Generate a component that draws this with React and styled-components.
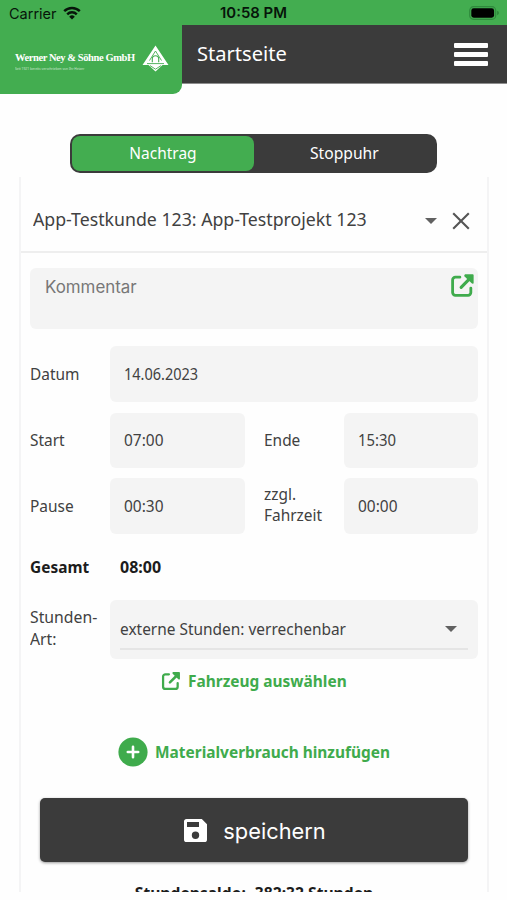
import React, { useState } from 'react';
import styled, { createGlobalStyle } from 'styled-components';

const App = () => {
  const [mode, setMode] = useState('nachtrag');

  return (
    <Screen>
      <GlobalStyle />
      <StatusBar>
        <Carrier>
          <span>Carrier</span>
          <WifiIcon />
        </Carrier>
        <Clock>10:58 PM</Clock>
        <BatteryIcon />
      </StatusBar>

      <TopBar>
        <LogoTab>
          <LogoText>
            <LogoName>Werner Ney &amp; Söhne GmbH</LogoName>
            <LogoClaim>Seit 1921 bereits verschrieben von Ihr Heizer</LogoClaim>
          </LogoText>
          <LogoMark />
        </LogoTab>
        <PageTitle><Label $size={20.5} $scale={0.98}>Startseite</Label></PageTitle>
        <MenuButton aria-label="Menü">
          <MenuLine />
          <MenuLine />
          <MenuLine />
        </MenuButton>
      </TopBar>

      <Switch>
        <SwitchOption $active={mode === 'nachtrag'} onClick={() => setMode('nachtrag')}>
          <Label $size={17} $scale={0.91} $center>Nachtrag</Label>
        </SwitchOption>
        <SwitchOption $active={mode === 'stoppuhr'} onClick={() => setMode('stoppuhr')}>
          <Label $size={17} $scale={0.92} $center>Stoppuhr</Label>
        </SwitchOption>
      </Switch>

      <Card>
        <ProjectRow>
          <ProjectName><Label $size={18} $scale={0.984}>App-Testkunde 123: App-Testprojekt 123</Label></ProjectName>
          <Caret />
          <CloseIcon />
        </ProjectRow>

        <Form>
          <Comment>
            <span>Kommentar</span>
            <ExternalIcon size={25} />
          </Comment>

          <Row $height={56}>
            <FieldLabel><Label>Datum</Label></FieldLabel>
            <Field><Label $scale={0.905}>14.06.2023</Label></Field>
          </Row>
          <Row $height={55} $top={11}>
            <FieldLabel $up={1}><Label>Start</Label></FieldLabel>
            <Field $up={1}><Label>07:00</Label></Field>
            <FieldLabel $second $up={1}><Label>Ende</Label></FieldLabel>
            <Field $up={1}><Label $scale={0.93}>15:30</Label></Field>
          </Row>
          <Row $height={56} $top={10}>
            <FieldLabel><Label>Pause</Label></FieldLabel>
            <Field><Label>00:30</Label></Field>
            <FieldLabel $second $line={21} $up={3}><Label>zzgl.<br />Fahrzeit</Label></FieldLabel>
            <Field><Label>00:00</Label></Field>
          </Row>

          <TotalRow>
            <FieldLabel><Label $bold>Gesamt</Label></FieldLabel>
            <Label $bold $scale={1}>08:00</Label>
          </TotalRow>

          <Row $height={59}>
            <FieldLabel $line={22} $up={4}><Label $scale={0.985}>Stunden-<br />Art:</Label></FieldLabel>
            <SelectField>
              <SelectValue>
                <Label>externe Stunden: verrechenbar</Label>
                <Caret />
              </SelectValue>
            </SelectField>
          </Row>

          <VehicleLink>
            <ExternalIcon size={20} />
            <Label $bold>Fahrzeug auswählen</Label>
          </VehicleLink>
          <MaterialLink>
            <PlusIcon />
            <Label $bold>Materialverbrauch hinzufügen</Label>
          </MaterialLink>

          <SaveButton>
            <SaveIcon />
            <span>speichern</span>
          </SaveButton>

          <Balance><Label $bold $scale={0.977} $center>Stundensaldo: -382:32 Stunden</Label></Balance>
        </Form>
      </Card>
    </Screen>
  );
};

// Icons
const WifiIcon = () => (
  <svg width="18" height="14" viewBox="0 0 18 14">
    <path d="M9 13.5 6.2 10.7a4 4 0 0 1 5.6 0z" fill="#07150a" />
    <path d="M4.2 8.3a6.8 6.8 0 0 1 9.6 0M1.2 5.2a11 11 0 0 1 15.6 0" fill="none" stroke="#07150a" strokeWidth="2.4" />
  </svg>
);

const BatteryIcon = () => (
  <svg width="31" height="14" viewBox="0 0 31 14">
    <rect x="0.7" y="0.7" width="26" height="12.6" rx="3.8" fill="none" stroke="#2f8a3c" strokeWidth="1.2" />
    <rect x="2.3" y="2.3" width="22.8" height="9.4" rx="2.4" fill="#000" />
    <path d="M28 4.8q2 .6 2 2.2t-2 2.2z" fill="#2f8a3c" />
  </svg>
);

const LogoMark = () => (
  <svg width="27" height="27" viewBox="0 0 27 27">
    <path d="M13.5.5 26.5 20h-6l-7 6.5-7-6.5h-6z" fill="#fff" />
    <path d="M13.500 6 7.500 15.500M13.500 6l6 9.500M5 18.600h17M8 20.600l5.500 3.600 5.500-3.600" fill="none" stroke="#43ad50" strokeWidth="0.9" />
    <path d="M10.300 17.200v-3.200a3.200 3.200 0 0 1 6.400 0v3.200" fill="none" stroke="#43ad50" strokeWidth="1.1" />
  </svg>
);

const Caret = () => (
  <svg width="12" height="6" viewBox="0 0 12 6">
    <path d="M0 0h12L6 6z" fill="#616161" />
  </svg>
);

const CloseIcon = () => (
  <svg width="18" height="18" viewBox="0 0 18 18">
    <path d="M1.2 1.2l15.6 15.6M16.8 1.2 1.2 16.8" stroke="#555" strokeWidth="2.1" />
  </svg>
);

const ExternalIcon = ({ size }) => (
  <svg width={size} height={size} viewBox="0 0 24 24">
    <path
      d="M9.5 4H5.2a2.7 2.7 0 0 0-2.7 2.7v12.1a2.7 2.7 0 0 0 2.7 2.7h12.1a2.7 2.7 0 0 0 2.7-2.7v-4.3"
      fill="none"
      stroke="#3fab4c"
      strokeWidth="2.7"
      strokeLinecap="round"
    />
    <path d="M10.7 13.7l8-8" stroke="#3fab4c" strokeWidth="3" strokeLinecap="round" />
    <path d="M14.500 1.200h7.200q1 0 1 1v7.300q-.7 1.400-1.900.4L14 3.400q-1-1.400.5-2.200z" fill="#3fab4c" />
  </svg>
);

const PlusIcon = () => (
  <svg width="30" height="30" viewBox="0 0 30 30">
    <circle cx="15" cy="15" r="14.6" fill="#3fab4c" />
    <path d="M15 9.800v10.400M9.800 15h10.400" stroke="#fff" strokeWidth="2.600" strokeLinecap="round" />
  </svg>
);

const SaveIcon = () => (
  <svg width="23" height="23" viewBox="0 0 23 23">
    <path
      fillRule="evenodd"
      d="M2.600 0H17.800L23 5.200V20.400A2.600 2.600 0 0 1 20.400 23H2.600A2.600 2.600 0 0 1 0 20.400V2.600A2.600 2.600 0 0 1 2.600 0zM3 3v5h12V3zM11.500 12.600a3.700 3.700 0 1 0 0 7.400 3.700 3.700 0 0 0 0-7.400z"
      fill="#fff"
    />
  </svg>
);

// Styled Components
const GlobalStyle = createGlobalStyle`
  * {
    box-sizing: border-box;
  }

  body {
    margin: 0;
    background: #fefefe;
    font-family: 'Noto Sans', sans-serif;
    color: #414141;
  }

  button {
    font: inherit;
    color: inherit;
    border: none;
    padding: 0;
    cursor: pointer;
  }

  svg {
    display: block;
    flex: none;
  }
`;

const Screen = styled.div`
  width: 507px;
  height: 900px;
  overflow: hidden;
`;

// Condensed text, the scale is the horizontal squeeze
const Label = styled.span`
  display: inline-block;
  font-size: ${({ $size }) => $size || 16}px;
  font-weight: ${({ $bold }) => ($bold ? 700 : 400)};
  white-space: nowrap;
  transform: scaleX(${({ $scale }) => $scale || 0.965});
  transform-origin: ${({ $center }) => ($center ? 'center' : 'left')};
`;

const StatusBar = styled.header`
  height: 25px;
  padding: 1px 7px 0 9px;
  display: grid;
  grid-template-columns: 1fr auto 1fr;
  align-items: center;
  background: #43ad50;
  color: #07150a;
  font-family: Inter, sans-serif;
  font-size: 14.5px;

  > svg {
    justify-self: end;
  }
`;

const Carrier = styled.div`
  display: flex;
  align-items: center;
  gap: 6px;
`;

const Clock = styled.div`
  margin-right: 2px;
  font-size: 14.9px;
  font-weight: 600;
`;

const TopBar = styled.nav`
  height: 59px;
  display: flex;
  background: #3b3b3b;
  border-bottom: 1px solid #8d8d8d;
`;

const LogoTab = styled.div`
  width: 182px;
  height: 69px;
  flex: none;
  padding: 20px 0 0 15px;
  display: flex;
  gap: 7px;
  background: #43ad50;
  border-radius: 0 0 9px 0;
`;

const LogoText = styled.div`
  width: 120px;
  padding-top: 5px;
  color: #fff;
  white-space: nowrap;
`;

const LogoName = styled.div`
  font-family: 'Liberation Serif', serif;
  font-size: 10.5px;
  font-weight: 700;
  line-height: 16px;
  letter-spacing: -0.42px;
`;

const LogoClaim = styled.div`
  font-size: 3.3px;
  line-height: 5px;
  opacity: 0.7;
`;

const PageTitle = styled.div`
  flex: 1;
  padding: 14px 0 0 15px;
  line-height: 28px;
  color: #fff;
`;

const MenuButton = styled.button`
  width: 34px;
  margin-right: 19px;
  padding-top: 1px;
  display: flex;
  flex-direction: column;
  justify-content: center;
  gap: 4px;
  background: none;
`;

const MenuLine = styled.span`
  height: 5px;
  background: #fff;
  border-radius: 1px;
`;

const Switch = styled.div`
  width: 367px;
  height: 39px;
  margin: 50px 0 0 70px;
  padding: 2px;
  display: flex;
  background: #3b3b3b;
  border-radius: 10px;
`;

const SwitchOption = styled.button`
  flex: 1;
  padding-bottom: 2px;
  background: ${({ $active }) => ($active ? '#43ad50' : 'transparent')};
  border-radius: 8px;
  color: #fff;
  line-height: 24px;
`;

const Card = styled.main`
  width: 470px;
  height: 715px;
  margin: 4px 0 0 19px;
  overflow: hidden;
  border: solid #f4f4f5;
  border-width: 0 2px;
`;

const ProjectRow = styled.div`
  height: 76px;
  padding: 13px 17px 0 12px;
  display: flex;
  align-items: center;
  border-bottom: 2px solid #eee;

  > svg:last-child {
    margin-left: 15px;
  }
`;

const ProjectName = styled.div`
  flex: 1;
  padding-bottom: 3px;
`;

const Form = styled.div`
  width: 448px;
  margin: 15px 0 0 9px;
`;

const Comment = styled.div`
  height: 61px;
  margin-bottom: 17px;
  padding: 5px 3px 0 15px;
  display: flex;
  justify-content: space-between;
  background: #f4f4f4;
  border-radius: 6px;
  font-family: Inter, sans-serif;
  font-size: 16.9px;
  line-height: 28px;
  color: #777;
`;

const Row = styled.div`
  height: ${({ $height }) => $height}px;
  margin-top: ${({ $top }) => $top || 0}px;
  display: flex;
  align-items: stretch;
`;

const FieldLabel = styled.div`
  width: ${({ $second }) => ($second ? 99 : 80)}px;
  padding-left: ${({ $second }) => ($second ? 19 : 0)}px;
  padding-bottom: ${({ $up }) => $up || 0}px;
  flex: none;
  display: flex;
  align-items: center;
  line-height: ${({ $line }) => $line || 22}px;
`;

const Field = styled.div`
  flex: 1;
  padding: 0 0 ${({ $up }) => $up || 0}px 14px;
  display: flex;
  align-items: center;
  background: #f4f4f4;
  border-radius: 6px;
`;

const TotalRow = styled.div`
  height: 66px;
  display: flex;
  align-items: center;
  color: #1c1c1c;

  > ${FieldLabel} {
    width: 90px;
  }
`;

const SelectField = styled.div`
  flex: 1;
  padding: 9px 10px;
  background: #f4f4f4;
  border-radius: 6px;
`;

const SelectValue = styled.div`
  height: 41px;
  padding: 1px 11px 0 0;
  display: flex;
  align-items: center;
  justify-content: space-between;
  border-bottom: 2px solid #e5e5e5;
`;

const ActionLink = styled.div`
  display: flex;
  align-items: center;
  color: #3fab4c;
`;

const VehicleLink = styled(ActionLink)`
  height: 44px;
  padding-left: 131px;
  gap: 7px;
`;

const MaterialLink = styled(ActionLink)`
  height: 30px;
  margin: 34px 0 31px;
  padding-left: 88px;
  gap: 7px;
`;

const SaveButton = styled.button`
  width: 428px;
  height: 64px;
  margin-left: 10px;
  padding: 1px 0 0 2px;
  display: flex;
  align-items: center;
  justify-content: center;
  gap: 16px;
  background: #3b3b3b;
  border-radius: 5px;
  box-shadow: 0 1px 3px rgba(0, 0, 0, 0.4);
  color: #fff;
  font-family: Inter, sans-serif;
  font-size: 21.8px;
`;

const Balance = styled.div`
  margin-top: 19px;
  text-align: center;
  line-height: 24px;
  color: #1c1c1c;
`;

export default App;
